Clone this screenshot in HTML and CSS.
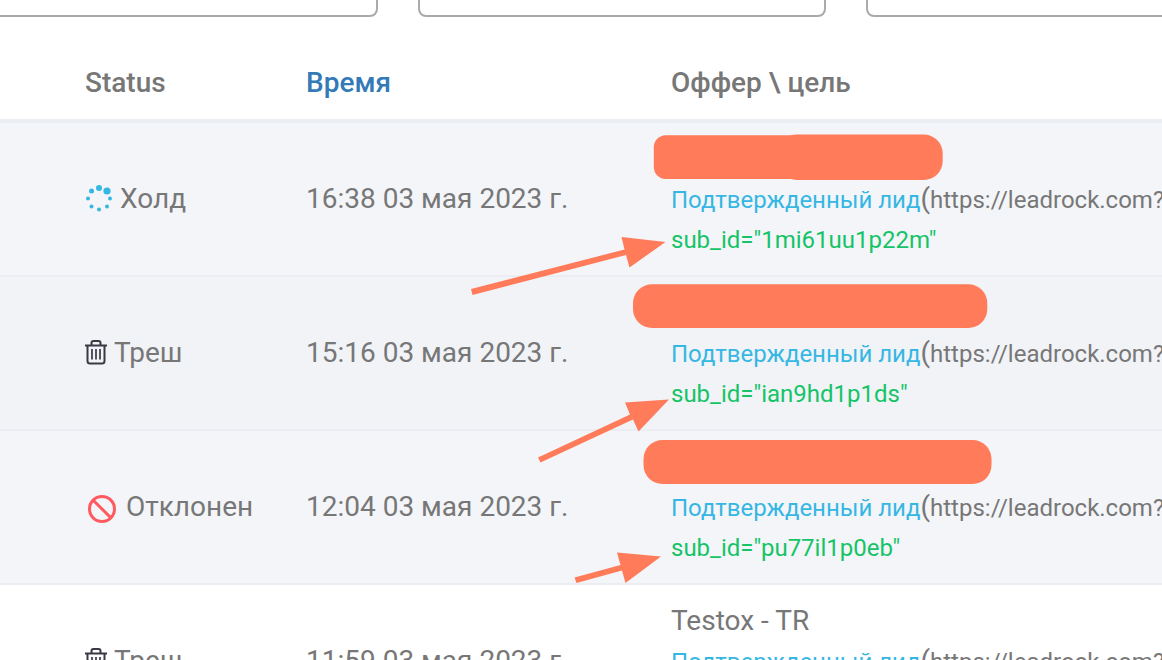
FILE: index.html
```html
<!DOCTYPE html>
<html lang="ru">
<head>
<meta charset="utf-8">
<title>Leads</title>
<link rel="stylesheet" href="styles.css">
</head>
<body>
<svg class="sprite" aria-hidden="true">
  <symbol id="trash" viewBox="0 1 22 26">
    <g fill="none" stroke="#3a3844" stroke-width="2">
      <path d="M0 6.500H22M6.500 6V4Q6.500 2 8.500 2H13.500Q15.500 2 15.500 4V6" />
      <path d="M2.500 7V22Q2.500 24.500 5 24.500H17Q19.500 24.500 19.500 22V7" />
      <path d="M7 10V20.500M11 10V20.500M15 10V20.500" stroke-width="1.700" />
    </g>
  </symbol>
</svg>
<main class="page">
  <form class="filters">
    <input class="filter" type="text" aria-label="Status">
    <input class="filter" type="text" aria-label="Время">
    <input class="filter" type="text" aria-label="Оффер">
  </form>
  <table class="leads">
    <thead>
      <tr>
        <th class="col-status">Status</th>
        <th class="col-time"><a class="sort" href="#">Время</a></th>
        <th class="col-offer">Оффер \ цель</th>
      </tr>
    </thead>
    <tbody>
      <tr class="marked">
        <td class="col-status"><div class="status">
          <svg class="icon-hold" viewBox="0 1 28 28" fill="#36b7e3" aria-hidden="true"><circle cx="14" cy="4" r="3"/><circle cx="22" cy="7" r="3.600"/><circle cx="25" cy="14.500" r="2"/><circle cx="22" cy="22.500" r="2"/><circle cx="14" cy="25.500" r="2"/><circle cx="6.500" cy="22.500" r="2"/><circle cx="3" cy="14.500" r="2"/><circle cx="6.500" cy="7" r="2.500"/></svg>
          <span>Холд</span></div></td>
        <td class="col-time">16:38 03 мая 2023 г.</td>
        <td class="col-offer"><div class="offer"></div><div class="goal"><a class="goal-link" href="#">Подтвержденный лид</a>(<span class="url">https://leadrock.com?t</span></div><div class="sub"><span class="sub-id">sub_id="1mi61uu1p22m"</span></div></td>
      </tr>
      <tr class="marked alt">
        <td class="col-status"><div class="status"><svg class="icon-trash" aria-hidden="true"><use href="#trash"/></svg><span>Треш</span></div></td>
        <td class="col-time">15:16 03 мая 2023 г.</td>
        <td class="col-offer"><div class="offer"></div><div class="goal"><a class="goal-link" href="#">Подтвержденный лид</a>(<span class="url">https://leadrock.com?t</span></div><div class="sub"><span class="sub-id">sub_id="ian9hd1p1ds"</span></div></td>
      </tr>
      <tr class="marked">
        <td class="col-status"><div class="status wide">
          <svg class="icon-ban" viewBox="0 0 32 32" fill="none" stroke="#ff5a5f" stroke-width="3" aria-hidden="true"><circle cx="17" cy="18" r="12.500"/><path d="M8.200 9.200L25.800 26.800"/></svg>
          <span>Отклонен</span></div></td>
        <td class="col-time">12:04 03 мая 2023 г.</td>
        <td class="col-offer"><div class="offer"></div><div class="goal"><a class="goal-link" href="#">Подтвержденный лид</a>(<span class="url">https://leadrock.com?t</span></div><div class="sub"><span class="sub-id">sub_id="pu77il1p0eb"</span></div></td>
      </tr>
      <tr>
        <td class="col-status"><div class="status"><svg class="icon-trash" aria-hidden="true"><use href="#trash"/></svg><span>Треш</span></div></td>
        <td class="col-time">11:59 03 мая 2023 г.</td>
        <td class="col-offer"><div class="offer">Testox - TR</div><div class="goal"><a class="goal-link" href="#">Подтвержденный лид</a>(<span class="url">https://leadrock.com?t</span></div><div class="sub"></div></td>
      </tr>
    </tbody>
  </table>
  <svg class="notes" width="1162" height="660" viewBox="0 0 1162 660" fill="#ff7b5a" aria-hidden="true">
    <rect x="653.800" y="135.300" width="200" height="43.700" rx="12"/>
    <rect x="778" y="134.500" width="164.700" height="45.500" rx="19"/>
    <rect x="633" y="284.300" width="354.300" height="43.700" rx="19"/>
    <rect x="643.500" y="440" width="348" height="44" rx="19"/>
    <path d="M471 289L624.500 249.500L621.500 237L665.500 242L629.500 267.500L626 255L472.500 295Z"/>
    <path d="M538 457.500L630 414.500L625 402.500L669 399.500L638.500 431.500L633 419.500L540.500 462.500Z"/>
    <path d="M574.500 577.500L620.500 565L617 552.500L661 556.500L625.500 583L622 570.500L576.500 583Z"/>
  </svg>
</main>
</body>
</html>
```
FILE: styles.css
```css
* {
  box-sizing: border-box;
}

body {
  margin: 0;
  background: #fff;
  color: #777;
  font: 28px/40px Roboto, "Open Sans", sans-serif;
}

.sprite {
  position: absolute;
  width: 0;
  height: 0;
}

.page {
  position: relative;
  height: 100vh;
  overflow: hidden;
}

.filters {
  display: grid;
  grid-template-columns: repeat(3, 1fr);
  gap: 40px;
  margin: -51px -112px 0 -30px;
}

.filter {
  width: 100%;
  height: 68px;
  padding: 12px 24px;
  border: 2px solid #aaa;
  border-radius: 8px;
  background: #fff;
  font: inherit;
}

.leads {
  width: 100%;
  margin-top: 30px;
  border-collapse: separate;
  border-spacing: 0;
  table-layout: fixed;
}

.leads th,
.leads td {
  padding: 16px;
  border-bottom: 2px solid #ebedf2;
  text-align: left;
  vertical-align: middle;
  white-space: nowrap;
}

.leads th {
  border-bottom: 4px solid #ebeef3;
  font-weight: 500;
}

.leads .col-status {
  width: 290px;
  padding-left: 85px;
}

.leads .col-time {
  width: 365px;
}

.marked {
  background: #f4f5f9;
}

.marked.alt {
  background: #f1f3f7;
}

.sort {
  color: #337ab7;
  text-decoration: none;
}

.status {
  display: flex;
  align-items: center;
  gap: 7px;
}

.status.wide {
  gap: 9px;
}

.icon-hold {
  width: 28px;
  height: 28px;
}

.icon-trash {
  width: 22px;
  height: 26px;
}

.icon-ban {
  width: 32px;
  height: 32px;
}

.offer,
.goal,
.sub {
  height: 40px;
}

.goal-link {
  color: #36b7e3;
  font-size: 24px;
  text-decoration: none;
}

.url {
  font-size: 24px;
}

.sub-id {
  color: #15c467;
  font-size: 24px;
}

.notes {
  position: absolute;
  top: 0;
  left: 0;
}
```
